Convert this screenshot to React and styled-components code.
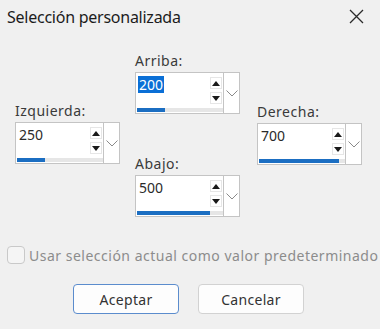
import React from "react";
import styled, { createGlobalStyle } from "styled-components";

const Global = createGlobalStyle`
  html, body { margin: 0; padding: 0; background: #f0f0f0; }
  body { font-family: "Noto Sans", "Open Sans", sans-serif; }
`;

const Dialog = styled.div`
  width: 380px;
  height: 329px;
  background: #f0f0f0;
  display: flex;
  flex-direction: column;
  overflow: hidden;
`;

const TitleBar = styled.div`
  height: 32px;
  display: flex;
  align-items: center;
  justify-content: space-between;
  padding: 0 16px 0 7px;
`;

const Title = styled.div`
  font-size: 16px;
  letter-spacing: -0.25px;
  color: #1c1c1c;
  line-height: 20px;
  margin-top: 1px;
`;

const Fields = styled.div`
  display: flex;
  align-items: flex-start;
  padding-left: 15px;
  height: 186px;
`;

const Column = styled.div`
  width: 105px;
  display: flex;
  flex-direction: column;
  gap: 41px;
  padding-top: ${(p) => p.$top}px;
  margin-right: ${(p) => p.$gap || 0}px;
`;

const Field = styled.div`
  display: flex;
  flex-direction: column;
`;

const Label = styled.div`
  font-size: 14px;
  line-height: 18px;
  height: 18px;
  color: #3a3a3a;
  letter-spacing: 0.5px;
  margin-bottom: 2px;
`;

const Spin = styled.div`
  display: flex;
  width: 105px;
  height: 42px;
`;

const Main = styled.div`
  width: 88px;
  box-sizing: border-box;
  border: 1px solid #c4c4c4;
  border-right: none;
  background: #fff;
  display: flex;
  flex-direction: column;
`;

const Top = styled.div`
  flex: 1;
  display: flex;
  justify-content: space-between;
  padding: 3px 1px 0 1px;
`;

const Value = styled.span`
  align-self: flex-start;
  font-size: 14px;
  line-height: 17px;
  height: 17px;
  padding: 0 1px;
  color: ${(p) => (p.$selected ? "#fff" : "#2a2a2a")};
  background: ${(p) => (p.$selected ? "#0a6fd6" : "transparent")};
  margin-left: 1px;
`;

const Arrows = styled.div`
  display: flex;
  flex-direction: column;
  gap: 3px;
  margin-top: 1px;
`;

const ArrowBtn = styled.div`
  width: 12px;
  height: 12px;
  box-sizing: border-box;
  border: 1px solid #e6e6e6;
  display: flex;
  align-items: center;
  justify-content: center;
`;

const Track = styled.div`
  height: 4px;
  background: #e6e6e6;
  margin: 0 0 1px 1px;
`;

const Fill = styled.div`
  height: 100%;
  background: #1b6ec2;
`;

const Drop = styled.div`
  width: 17px;
  box-sizing: border-box;
  border: 1px solid #c4c4c4;
  background: #fff;
  display: flex;
  align-items: center;
  justify-content: center;
`;

const CheckRow = styled.div`
  display: flex;
  align-items: center;
  padding-left: 7px;
  gap: 4px;
  height: 18px;
  margin-top: 28px;
`;

const Box = styled.div`
  width: 18px;
  height: 18px;
  box-sizing: border-box;
  border: 1px solid #c9c9c9;
  border-radius: 4px;
  background: #f5f5f5;
`;

const CheckText = styled.span`
  font-size: 14px;
  color: #8c8c8c;
  letter-spacing: 0.5px;
  white-space: nowrap;
`;

const Buttons = styled.div`
  display: flex;
  gap: 19px;
  padding-left: 73px;
  margin-top: 20px;
`;

const Button = styled.button`
  width: 106px;
  height: 30px;
  box-sizing: border-box;
  border-radius: 4px;
  background: #fdfdfd;
  border: 1px solid ${(p) => (p.$primary ? "#5b8ccd" : "#d2d2d2")};
  font-family: "Noto Sans", "Open Sans", sans-serif;
  font-size: 14px;
  letter-spacing: 0.3px;
  color: #333;
  padding: 0;
`;

const Up = () => (
  <svg width="8" height="5" viewBox="0 0 8 5"><path d="M0 5 L4 0 L8 5 Z" fill="#1a1a1a" /></svg>
);
const Down = () => (
  <svg width="8" height="5" viewBox="0 0 8 5"><path d="M0 0 L4 5 L8 0 Z" fill="#1a1a1a" /></svg>
);
const Chevron = () => (
  <svg width="12" height="7" viewBox="0 0 12 7"><path d="M0.5 0.5 L6 6 L11.5 0.5" fill="none" stroke="#8a8a8a" strokeWidth="1" /></svg>
);

function SpinField({ label, value, fill, selected }) {
  return (
    <Field>
      <Label>{label}</Label>
      <Spin>
        <Main>
          <Top>
            <Value $selected={selected}>{value}</Value>
            <Arrows>
              <ArrowBtn><Up /></ArrowBtn>
              <ArrowBtn><Down /></ArrowBtn>
            </Arrows>
          </Top>
          <Track>
            <Fill style={{ width: `${fill}px` }} />
          </Track>
        </Main>
        <Drop><Chevron /></Drop>
      </Spin>
    </Field>
  );
}

export default function App() {
  return (
    <>
      <Global />
      <Dialog>
        <TitleBar>
          <Title>Selección personalizada</Title>
          <svg width="15" height="15" viewBox="0 0 15 15">
            <path d="M1 1 L14 14 M14 1 L1 14" stroke="#2a2a2a" strokeWidth="1.3" />
          </svg>
        </TitleBar>
        <Fields>
          <Column $top={70} $gap={15}>
            <SpinField label="Izquierda:" value="250" fill={28} />
          </Column>
          <Column $top={20} $gap={17}>
            <SpinField label="Arriba:" value="200" fill={28} selected />
            <SpinField label="Abajo:" value="500" fill={73} />
          </Column>
          <Column $top={71}>
            <SpinField label="Derecha:" value="700" fill={80} />
          </Column>
        </Fields>
        <CheckRow>
          <Box />
          <CheckText>Usar selección actual como valor predeterminado</CheckText>
        </CheckRow>
        <Buttons>
          <Button $primary>Aceptar</Button>
          <Button>Cancelar</Button>
        </Buttons>
      </Dialog>
    </>
  );
}
